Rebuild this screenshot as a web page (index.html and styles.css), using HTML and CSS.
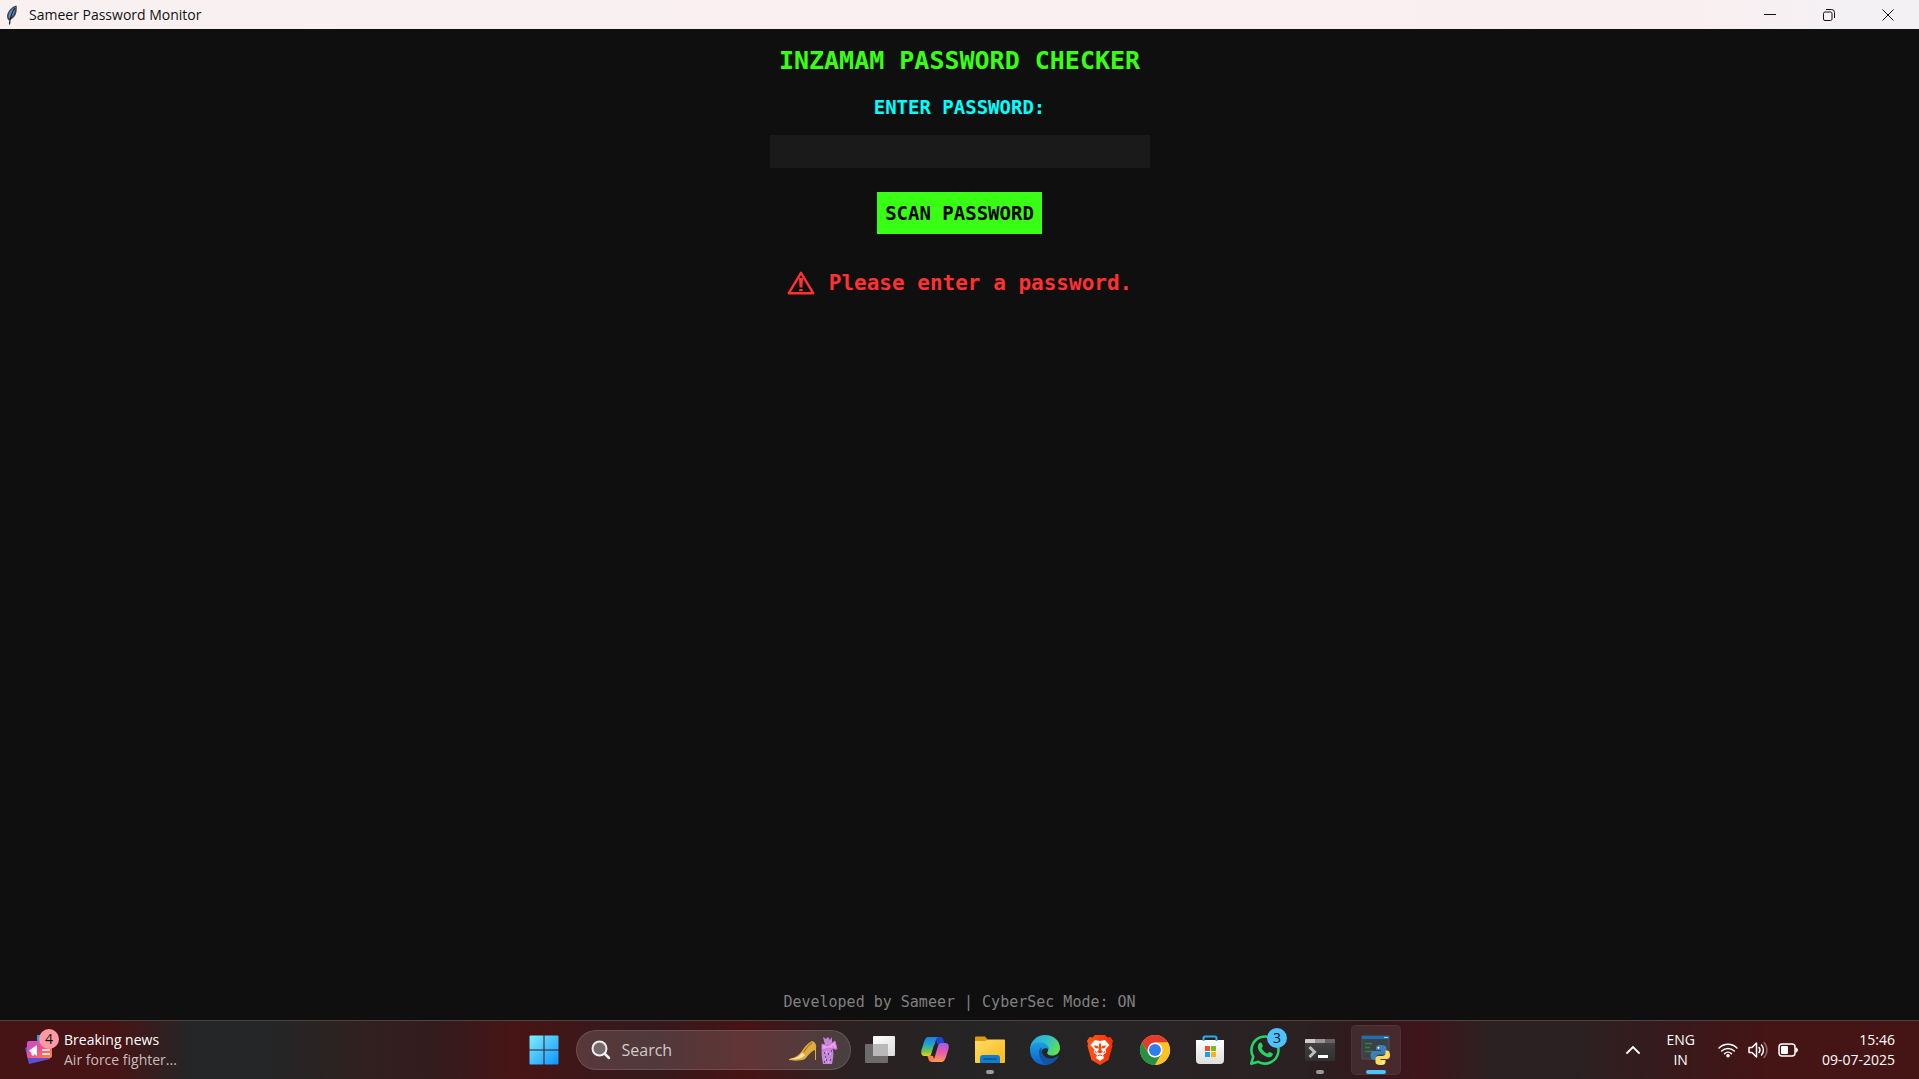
FILE: index.html
```html
<!DOCTYPE html>
<html lang="en">
<head>
<meta charset="utf-8">
<title>Sameer Password Monitor</title>
<link rel="stylesheet" href="styles.css">
</head>
<body>
<header class="titlebar">
  <svg class="feather" width="12" height="20" viewBox="0 0 12 20" aria-hidden="true">
    <path d="M10.500 .5C6 1.500 1.500 6 1 11c0 2 .8 3.500 2 4.500 4-1.500 7-5 7.500-9 .3-2 .5-4 0-6z" fill="#3d434a"/>
    <path d="M9.500 2C6 3.500 3 7 2.500 11c0 1 .3 2 1 2.500C7 11 9 8 9.500 2z" fill="#5b93d1"/>
    <path d="M9 3C6 7 4 12 3.500 19.500" fill="none" stroke="#16191d" stroke-width="1.200"/>
  </svg>
  <h1 class="window-title">Sameer Password Monitor</h1>
  <div class="window-controls">
    <button class="window-button" aria-label="Minimize"><svg width="14" height="14" viewBox="0 0 14 14"><path d="M1 6.500h12"/></svg></button>
    <button class="window-button" aria-label="Restore"><svg width="14" height="14" viewBox="0 0 14 14"><rect x="1.500" y="4" width="8.500" height="8.500" rx="1.500"/><path d="M4 1.500h5.500a3 3 0 0 1 3 3V10"/></svg></button>
    <button class="window-button" aria-label="Close"><svg width="14" height="14" viewBox="0 0 14 14"><path d="M1.500 1.500l11 11M12.500 1.500l-11 11"/></svg></button>
  </div>
</header>

<main class="app">
  <h2 class="heading">INZAMAM PASSWORD CHECKER</h2>
  <form class="checker" onsubmit="return false">
    <label class="label" for="password">ENTER PASSWORD:</label>
    <input class="password" id="password" type="password">
    <button class="scan" type="submit">SCAN PASSWORD</button>
  </form>
  <p class="message" role="alert">
    <svg width="28" height="24" viewBox="0 0 28 24" aria-hidden="true">
      <path d="M14 1.800L26.200 22.200H1.800z" fill="none" stroke="#ff3131" stroke-width="2.400" stroke-linejoin="round"/>
      <path d="M12 7h4l-.6 9.500h-2.800zM12.300 18h3.400v2.300h-3.400z" fill="#ff3131"/>
    </svg>
    <span>Please enter a password.</span>
  </p>
  <footer class="credit">Developed by Sameer | CyberSec Mode: ON</footer>
</main>

<nav class="taskbar" aria-label="Taskbar">
  <button class="widgets">
    <span class="badged">
      <svg width="28" height="30" viewBox="0 0 28 30" aria-hidden="true">
        <defs><linearGradient id="news" x2="1" y2="1"><stop offset="0" stop-color="#c44fd8"/><stop offset=".5" stop-color="#f0508c"/><stop offset="1" stop-color="#ff8a3c"/></linearGradient></defs>
        <path d="M0 13l12-7 13 2v16L4 29z" fill="#5b51d8"/>
        <rect x="12" y="0" width="8" height="12" fill="#2a9be8"/>
        <rect x="2" y="6" width="25" height="17" rx="2" fill="url(#news)"/>
        <path d="M4 15.500L12 10v11l-3-2-.5 2-2-1v-2z" fill="#fff"/>
        <path d="M17 15h8M17 19h8" stroke="#ffd9c8" stroke-width="2"/>
      </svg>
      <span class="badge badge-news">4</span>
    </span>
    <span class="news">
      <span>Breaking news</span>
      <span class="news-detail">Air force fighter...</span>
    </span>
  </button>

  <div class="launcher">
    <button class="tile" aria-label="Start">
      <svg width="32" height="32" viewBox="0 0 32 32"><defs><linearGradient id="win" x2="1" y2="1"><stop offset="0" stop-color="#7cf0ff"/><stop offset="1" stop-color="#0b93ff"/></linearGradient></defs>
      <path d="M1.500 2.500a1 1 0 0 1 1-1h13v14h-14zM16.500 1.500h13a1 1 0 0 1 1 1v13h-14zM1.500 16.500h14v14h-13a1 1 0 0 1-1-1zM16.500 16.500h14v13a1 1 0 0 1-1 1h-13z" fill="url(#win)"/></svg>
    </button>
    <label class="search">
      <svg width="20" height="20" viewBox="0 0 20 20" aria-hidden="true"><circle cx="8.500" cy="8.500" r="7" fill="#77696b" stroke="#eee" stroke-width="2"/><path d="M13.500 13.500L18 18" stroke="#eee" stroke-width="2.500" stroke-linecap="round"/></svg>
      <input class="search-input" type="text" placeholder="Search" aria-label="Search">
      <svg width="52" height="32" viewBox="0 0 52 32" aria-hidden="true">
        <path d="M1 25c6-1 9-3 13-8C17 12 20 9 24 7c3 1 5 4 4 7v12h-1V16c-5 2-7 6-10 9-4 2-12 2-16 1z" fill="#e0ab3e"/>
        <path d="M2 25c5-1 9-2 12-6l3 2c-3 4-9 5-15 4z" fill="#ffe6a0"/><path d="M16 18c3-5 5-7 8-9" fill="none" stroke="#8f6119"/>
        <path d="M35 3l3 2 2-2 2 3 2-3v8l-1 2 2 3c1 4 0 9-1 14H35c-1-6-2-11-1-16l3-3z" fill="#c588d9"/>
        <path d="M34 10l6 2 7-5 2 8-8-1-7 2zM44 12l4 4" fill="#eaa0ed" stroke="#d070df"/>
        <path d="M36 19h1m3 1h1m2-3h1m-7 6h1m4-1h1m-5 4h1m3 0h1m-7 2h1" stroke="#6c429c" stroke-width="2"/><path d="M38 18h1m3 4h1m-6 3h1m4-5h1m-3 8h1" stroke="#f7d1ff"/>
      </svg>
    </label>
    <button class="tile" aria-label="Task view">
      <svg width="32" height="32" viewBox="0 0 32 32"><defs><linearGradient id="tv" x2="1" y2="1"><stop offset="0" stop-color="#fff"/><stop offset="1" stop-color="#dcdcdc"/></linearGradient></defs>
      <rect x="9" y="2" width="22" height="20" rx="1" fill="url(#tv)"/><rect x="1" y="10" width="23" height="19" rx="1" fill="#6d6b6b"/><path d="M9 10h15v12H9z" fill="#b9b9b9"/></svg>
    </button>
    <button class="tile" aria-label="Copilot">
      <svg width="32" height="32" viewBox="0 0 32 32"><defs>
        <linearGradient id="cp1" x2="0" y2="1"><stop offset="0" stop-color="#1d7fe0"/><stop offset=".4" stop-color="#1fa5c9"/><stop offset=".75" stop-color="#74c54a"/><stop offset="1" stop-color="#f0cf20"/></linearGradient>
        <linearGradient id="cp2" x2="0" y2="1"><stop offset="0" stop-color="#a25ae8"/><stop offset=".5" stop-color="#ea5aa8"/><stop offset="1" stop-color="#ff9a50"/></linearGradient></defs>
      <path d="M16 3h5c2 0 3 1 3.500 3L26 11h-7z" fill="#1e45d8"/>
      <path d="M8 21l6 1 2 6H13c-2 0-3-1-3.500-3z" fill="#ff8048"/>
      <path d="M9 3h10c-2 1-2 3-3 6l-3 10c-.7 2-1.500 3-4 3H6c-3 0-4.500-2-3.500-6l2.500-8c1-3 2-5 4-5z" fill="url(#cp1)"/>
      <path d="M22.500 28h-10c2-1 2.500-3 3.500-6l3-10c.7-2 1.500-3 4-3h3c3 0 4.500 2 3.500 6l-2.500 8c-1 3-2.500 5-4.500 5z" fill="url(#cp2)"/>
      <path d="M15 11h3l-3 10h-3z" fill="#262323"/></svg>
    </button>
    <button class="tile running" aria-label="File Explorer">
      <svg width="32" height="32" viewBox="0 0 32 32"><defs><linearGradient id="fold" x2="1" y2="1"><stop offset="0" stop-color="#ffdc68"/><stop offset="1" stop-color="#fbb916"/></linearGradient></defs>
      <path d="M1 3.500a1 1 0 0 1 1-1h9l3 3.500h2v8H1z" fill="#dc9a10"/><path d="M1 7h10l3-1.500h16a1 1 0 0 1 1 1V28a1 1 0 0 1-1 1H2a1 1 0 0 1-1-1z" fill="url(#fold)"/>
      <path d="M6 29v-5a3 3 0 0 1 3-3h14a3 3 0 0 1 3 3v5z" fill="#0c7ed0"/><path d="M9.500 25h13" stroke="#074f96" stroke-width="1.500"/></svg>
    </button>
    <button class="tile" aria-label="Microsoft Edge">
      <svg width="32" height="32" viewBox="0 0 32 32"><defs>
        <linearGradient id="ed1" x1="0" y1=".2" x2="1" y2=".6"><stop offset="0" stop-color="#2aa6dc"/><stop offset=".5" stop-color="#2fc0cf"/><stop offset="1" stop-color="#62e04e"/></linearGradient>
        <linearGradient id="ed2" x2="0" y2="1"><stop offset="0" stop-color="#1b9de2"/><stop offset="1" stop-color="#0c63c8"/></linearGradient></defs>
      <path d="M1 16C1 7 8 1 16 1c9 0 15 6 15 13 0 5-4 7.500-7.500 7.500-4 0-6-1.500-5-3.500 2-3 0-7-5.500-8.500C8 8.500 3 11 1 16z" fill="url(#ed1)"/>
      <path d="M1 16c1-6 6-8 11-7.500 5 .5 8 3.500 8 7-3-2.500-8-1-8 4.500 0 5 3 9 7 10.700-1 .3-2 .3-3 .3C8 31 1 25 1 16z" fill="url(#ed2)"/>
      <path d="M10 18c0-2 .8-3.500 2.500-4.500-.5 6 3 11 9 11 3 0 5-1.200 7-2.500.6-.3 1 .1.800.6C27 27.500 22 31 17 31c-4-2-7-7-7-13z" fill="#1153a4"/></svg>
    </button>
    <button class="tile" aria-label="Brave">
      <svg width="32" height="32" viewBox="0 0 32 32"><defs><linearGradient id="br"><stop offset="0" stop-color="#ff5a1c"/><stop offset="1" stop-color="#ff2a00"/></linearGradient></defs>
      <path d="M11 1h10l2.500 2.500 3-.5L29 7l-1 3 .5 2-4 14L16 31l-8.500-5-4-14L4 10 3 7l2.500-4 3 .5z" fill="url(#br)"/>
      <path d="M11 6l5 1 5-1 4.500 5-4 4.500.8 3-3.300 2.500L20 24l-4 3-4-3 1-3-3.300-2.500.8-3-4-4.500z" fill="#fff"/>
      <path d="M9.500 11.500l4 .3 1.300 2.200-3 .5zM22.500 11.500l-4 .3-1.300 2.200 3 .5zM15 9.500h2l.3 6.500 1.700 2-3 1.500-3-1.500 1.700-2zM11.500 16.500l1.500 3-2-1zM20.500 16.500l-1.500 3 2-1z" fill="#ff4310"/><path d="M13.500 22l2.500-1.200 2.500 1.200" fill="none" stroke="#ff4310"/></svg>
    </button>
    <button class="tile" aria-label="Google Chrome">
      <svg width="32" height="32" viewBox="0 0 32 32"><circle cx="16" cy="16" r="15" fill="#fbbc05"/>
      <path d="M3 8.500A15 15 0 0 1 29 8.500H16L10 20z" fill="#e33b2e"/><path d="M3 8.500L9.600 19.700A7.500 7.500 0 0 0 22.500 19.700L16 31A15 15 0 0 1 3 8.500z" fill="#269145"/>
      <path d="M16 8.500h13A15 15 0 0 1 16 31l6.500-11.200z" fill="#fdc22a"/>
      <circle cx="16" cy="16" r="7.500" fill="#fff"/><circle cx="16" cy="16" r="6" fill="#2f7df0"/></svg>
    </button>
    <button class="tile" aria-label="Microsoft Store">
      <svg width="32" height="32" viewBox="0 0 32 32"><defs><linearGradient id="st" x2="0" y2="1"><stop offset="0" stop-color="#fff"/><stop offset="1" stop-color="#dedede"/></linearGradient></defs>
      <path d="M2 6h28v20a4 4 0 0 1-4 4H6a4 4 0 0 1-4-4z" fill="url(#st)"/><path d="M9.500 7V4a1.500 1.500 0 0 1 1.500-1.500h10A1.500 1.500 0 0 1 22.500 4v3" fill="none" stroke="#24b0ee" stroke-width="2"/>
      <path d="M11 12h5v5h-5z" fill="#e8532a"/><path d="M17 12h5v5h-5z" fill="#7fb914"/><path d="M11 18h5v5h-5z" fill="#16a3ec"/><path d="M17 18h5v5h-5z" fill="#fbb40e"/></svg>
    </button>
    <button class="tile" aria-label="WhatsApp">
      <span class="badged">
        <svg width="32" height="32" viewBox="0 0 32 32"><path d="M2.300 29.700l1.900-7A13.500 13.500 0 1 1 9.300 27.800z" fill="none" stroke="#25d366" stroke-width="2.600" stroke-linejoin="round"/>
        <path d="M11.500 8.500c.6 0 1 .2 1.200.8l1.100 2.500c.3.700-1.300 2-1.200 2.500 1.200 2.700 3.200 4.300 5.600 5.300.7 0 1.800-1.900 2.400-1.700l2.700 1.300c.6.300.6.600.5 1.200-.4 2-2.300 3-4.300 2.800-5.500-1-10-5.500-10.700-9.700-.2-2.200.8-4.700 2.700-5z" fill="#25d366"/></svg>
        <span class="badge badge-chat">3</span>
      </span>
    </button>
    <button class="tile running" aria-label="Terminal">
      <svg width="32" height="32" viewBox="0 0 32 32"><defs><linearGradient id="te" x2="0" y2="1"><stop offset="0" stop-color="#454545"/><stop offset="1" stop-color="#303030"/></linearGradient></defs>
      <rect x="1" y="5" width="30" height="22" rx="1" fill="url(#te)"/><path d="M1 9V6a1 1 0 0 1 1-1h9v4z" fill="#cfc9cb"/><path d="M11 5h10v4H11z" fill="#9a9496"/><path d="M21 5h9a1 1 0 0 1 1 1v3H21z" fill="#686264"/>
      <path d="M5.500 13l5 5-5 5" fill="none" stroke="#bdbdbd" stroke-width="3"/><path d="M14 22.500h10" stroke="#fff" stroke-width="3"/></svg>
    </button>
    <button class="tile running active" aria-label="Sameer Password Monitor">
      <svg width="32" height="32" viewBox="0 0 32 32"><path d="M2 2h27v23H2z" fill="#3b4144" stroke="#555"/><path d="M2 2h27v3H2z" fill="#1673b8"/><path d="M24 3.500h4" stroke="#9fd0f5"/>
      <path d="M5 9.500h7M5 13.500h5M5 17.500h8" stroke="#308340" stroke-width="1.500"/>
      <path d="M20.500 11c-4 0-4.500 1.500-4.500 3v2h5v1h-7c-2.500 0-3.500 2-3.500 4.500s1 4.500 3.500 4.500h2v-2.500c0-2 1.500-3 3.500-3h4c2 0 3-1 3-3V14c0-2-2-3-6-3z" fill="#3d7fb8"/>
      <path d="M21 31c4 0 4.500-1.500 4.500-3v-2h-5v-1h6c2.500 0 3.500-1.500 3.500-4s-1-4.500-3-4.500h-1.500V19c0 2-1.500 3-3.500 3h-3.500c-2 0-3 1-3 3v3c0 2 1.500 3 5.500 3z" fill="#ffdb5c"/>
      <circle cx="18.500" cy="13.700" r="1" fill="#fff"/><circle cx="23.200" cy="28.500" r="1" fill="#fff"/></svg>
    </button>
  </div>

  <div class="tray">
    <button class="tray-button" aria-label="Show hidden icons"><svg width="14" height="10" viewBox="0 0 14 10"><path d="M1 8l6-6 6 6" fill="none" stroke="#fff" stroke-width="1.800" stroke-linecap="round"/></svg></button>
    <button class="tray-button language"><span>ENG</span><span>IN</span></button>
    <button class="tray-button status" aria-label="Network, volume and battery">
      <svg width="20" height="16" viewBox="0 0 20 16"><g fill="none" stroke="#fff" stroke-width="1.500" stroke-linecap="round"><path d="M1 6a12.500 12.500 0 0 1 18 0"/><path d="M3.700 9a9 9 0 0 1 12.600 0"/><path d="M6.500 11.700a5 5 0 0 1 7 0"/></g><circle cx="10" cy="13.800" r="1.800" fill="#fff"/></svg>
      <svg width="20" height="18" viewBox="0 0 20 18"><g fill="none" stroke="#fff" stroke-width="1.500" stroke-linejoin="round" stroke-linecap="round"><path d="M1 6.500h3L8.500 2v14L4 11.500H1z"/><path d="M11 6.500a4 4 0 0 1 0 5M13.500 4a7.500 7.500 0 0 1 0 10"/><path d="M16 1.500a11 11 0 0 1 0 15" stroke="#8b6566"/></g></svg>
      <svg width="20" height="14" viewBox="0 0 20 14"><rect x="1" y="1" width="16" height="12" rx="3" fill="none" stroke="#fff" stroke-width="1.500"/><rect x="3" y="3" width="7" height="8" rx="1" fill="#fff"/><path d="M18 5c2 0 2 4 0 4z" fill="#fff" stroke="#fff"/></svg>
    </button>
    <button class="tray-button clock"><span>15:46</span><span>09-07-2025</span></button>
  </div>
</nav>
</body>
</html>
```

FILE: styles.css
```css
* {
  box-sizing: border-box;
}

body {
  margin: 0;
  min-height: 100vh;
  display: flex;
  flex-direction: column;
  background: #0f0f0f;
  font-family: "Open Sans", "Noto Sans", sans-serif;
  font-size: 14px;
  line-height: 20px;
}

button,
input {
  font: inherit;
  border: 0;
  padding: 0;
  border-radius: 0;
  background: none;
  color: inherit;
}

svg {
  display: block;
  flex: none;
}

/* Window title bar */
.titlebar {
  display: flex;
  align-items: center;
  height: 29px;
  padding: 0 2px 0 6px;
  gap: 11px;
  background: linear-gradient(90deg, #f9f0f2, #faeff0 88%, #f4f1f4 96%);
  color: #111;
}

.window-title {
  margin: 0;
  font-size: 14px;
  font-weight: 400;
}

.window-controls {
  display: flex;
  height: 100%;
  margin-left: auto;
}

.window-button {
  display: grid;
  place-items: center;
  width: 59px;
}

.window-button svg {
  fill: none;
  stroke: #111;
  stroke-width: 1;
}

/* Password checker */
.app {
  flex: 1;
  display: flex;
  flex-direction: column;
  align-items: center;
  padding: 16px 16px 8px;
  font-family: "DejaVu Sans Mono", "Liberation Mono", monospace;
  font-weight: 700;
}

.heading {
  margin: 0;
  font-size: 25px;
  line-height: 32px;
  color: #39ff14;
}

.checker {
  display: flex;
  flex-direction: column;
  align-items: center;
  margin-top: 18px;
  font-size: 19px;
  line-height: 24px;
}

.label {
  color: #00ffff;
}

.password {
  width: 380px;
  max-width: 100%;
  height: 33px;
  margin: 16px 0 24px;
  padding: 0 4px;
  background: #1a1a1a;
  color: #39ff14;
  text-align: center;
}

.scan {
  padding: 9px 8px;
  background: #39ff14;
  color: #000;
}

.message {
  display: flex;
  align-items: center;
  gap: 14px;
  margin: 35px 0 0;
  font-size: 21px;
  line-height: 28px;
  color: #ff3131;
}

.credit {
  margin-top: auto;
  font-size: 15px;
  font-weight: 400;
  color: #808080;
}

/* Taskbar */
.taskbar {
  display: grid;
  grid-template-columns: 1fr auto 1fr;
  align-items: center;
  height: 59px;
  border-top: 1px solid #4a4444;
  background: linear-gradient(90deg, #471415 0%, #471415 6%, #242627 10%, #242627 14%, #30201f 19%, #351b1c 23%, #481415 27%, #3b181a 31%, #35191b 34%, #481315 39%, #2c2021 44%, #252424 50%, #272324 60%, #2b2022 68%, #31191d 71%, #3f151a 74%, #2b2122 78%, #2b2122 82%, #351b1d 86%, #451415 92%, #451415 100%);
  background-origin: border-box;
  color: #fff;
}

.widgets {
  justify-self: start;
  display: flex;
  align-items: center;
  gap: 11px;
  padding-left: 25px;
  text-align: left;
}

.news,
.language,
.clock {
  display: flex;
  flex-direction: column;
}

.news-detail {
  color: #c8bcbc;
}

.badged {
  position: relative;
}

.badge {
  position: absolute;
  top: -6px;
  right: -6px;
  width: 20px;
  height: 20px;
  border-radius: 50%;
  color: #111;
  text-align: center;
}

.badge-news {
  background: #ff99a4;
}

.badge-chat {
  background: #4cc2ff;
}

.launcher {
  display: flex;
  align-items: center;
}

.tile {
  position: relative;
  display: grid;
  place-items: center;
  width: 55px;
  height: 50px;
}

.running::after {
  content: "";
  position: absolute;
  bottom: 1px;
  left: 50%;
  width: 8px;
  height: 4px;
  margin-left: -4px;
  border-radius: 2px;
  background: #9d9899;
}

.active {
  width: 50px;
  margin: 0 2px 0 3px;
  border-radius: 5px;
  background: rgba(255, 255, 255, 0.08);
  box-shadow: inset 0 0 0 1px rgba(255, 255, 255, 0.05);
}

.active::after {
  width: 20px;
  margin-left: -10px;
  background: #4cc2ff;
}

.search {
  display: flex;
  align-items: center;
  width: 275px;
  height: 40px;
  margin: 0 2px 0 4px;
  padding: 0 10px 0 14px;
  border: 1px solid rgba(255, 255, 255, 0.12);
  border-radius: 20px;
  background: rgba(255, 255, 255, 0.14);
}

.search-input {
  flex: 1;
  min-width: 0;
  padding-left: 11px;
  font-size: 16px;
}

.search-input::placeholder {
  color: #d2caca;
  opacity: 1;
}

.tray {
  justify-self: end;
  display: flex;
  align-items: center;
  padding-right: 24px;
}

.language {
  align-items: center;
  margin-left: 26px;
}

.status {
  display: flex;
  align-items: center;
  gap: 10px;
  margin-left: 23px;
}

.clock {
  align-items: flex-end;
  margin-left: 24px;
}
```
